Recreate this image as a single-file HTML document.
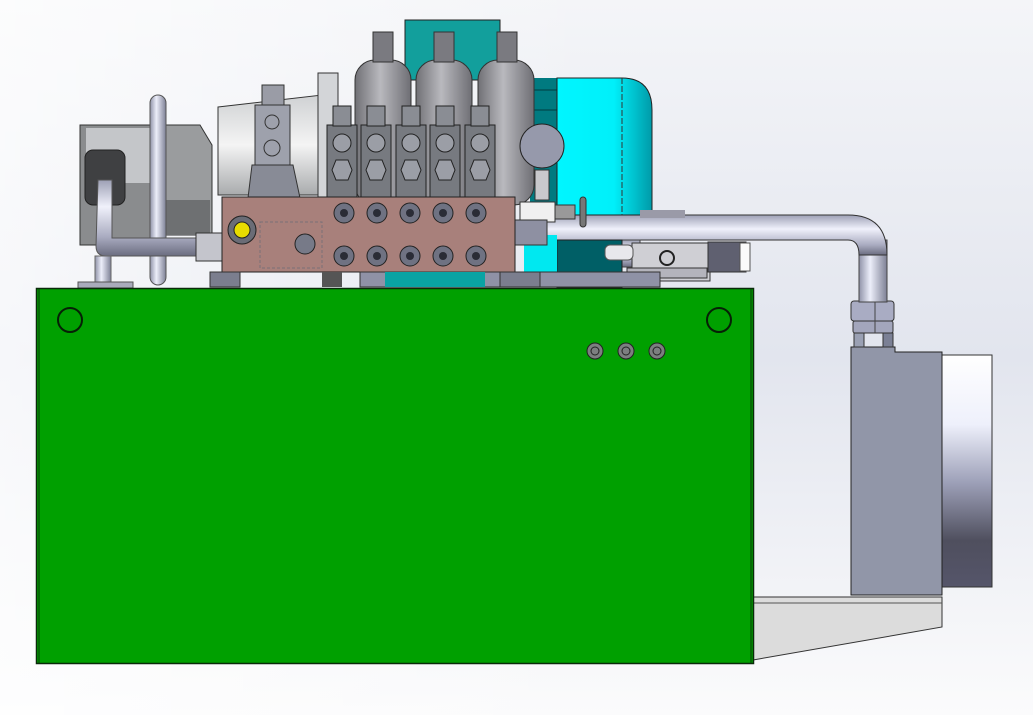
<!DOCTYPE html>
<html><head><meta charset="utf-8"><style>
html,body{margin:0;padding:0;width:1033px;height:715px;overflow:hidden;background:#fff}
svg{display:block}
</style></head><body>
<svg width="1033" height="715" viewBox="0 0 1033 715" xmlns="http://www.w3.org/2000/svg">
<defs>
<linearGradient id="bg" x1="0" y1="0" x2="0" y2="1">
<stop offset="0" stop-color="#f4f5f8"/><stop offset="0.5" stop-color="#e2e5ee"/><stop offset="1" stop-color="#fbfbfc"/></linearGradient>
<linearGradient id="bgx" x1="0" y1="0" x2="1" y2="0">
<stop offset="0" stop-color="#ffffff" stop-opacity="0.7"/><stop offset="1" stop-color="#ffffff" stop-opacity="0"/></linearGradient>
<linearGradient id="pipeH" x1="0" y1="0" x2="0" y2="1">
<stop offset="0" stop-color="#9da0b5"/><stop offset="0.35" stop-color="#f0f1fb"/><stop offset="0.75" stop-color="#a9abc0"/><stop offset="1" stop-color="#6b6d80"/></linearGradient>
<linearGradient id="pipeV" x1="0" y1="0" x2="1" y2="0">
<stop offset="0" stop-color="#8f92a8"/><stop offset="0.4" stop-color="#eceefa"/><stop offset="1" stop-color="#7d8095"/></linearGradient>
<linearGradient id="cyl" x1="0" y1="0" x2="1" y2="0">
<stop offset="0" stop-color="#707075"/><stop offset="0.45" stop-color="#b9b9be"/><stop offset="1" stop-color="#6e6e74"/></linearGradient>
<linearGradient id="disc" x1="0" y1="0" x2="0" y2="1">
<stop offset="0" stop-color="#ffffff"/><stop offset="0.3" stop-color="#eef0fb"/><stop offset="0.55" stop-color="#9da0b8"/><stop offset="0.8" stop-color="#4f4f5e"/><stop offset="1" stop-color="#55556a"/></linearGradient>
<linearGradient id="cyan" x1="0" y1="0" x2="1" y2="0">
<stop offset="0" stop-color="#00f6ff"/><stop offset="0.6" stop-color="#00f0fa"/><stop offset="1" stop-color="#009aa8"/></linearGradient>
<linearGradient id="bell" x1="0" y1="0" x2="0" y2="1">
<stop offset="0" stop-color="#cfd1d3"/><stop offset="0.5" stop-color="#f4f4f4"/><stop offset="1" stop-color="#a9abad"/></linearGradient>
</defs>
<rect width="1033" height="715" fill="url(#bg)"/>
<rect width="600" height="715" fill="url(#bgx)"/>

<!-- tray -->
<polygon points="753,597 942,597 942,627 753,660" fill="#dcdcdc" stroke="#333" stroke-width="1"/>
<line x1="753" y1="603" x2="942" y2="603" stroke="#555"/>
<!-- right box and disc -->
<rect x="940" y="355" width="52" height="232" fill="url(#disc)" stroke="#333"/>
<polygon points="851,347 895,347 895,352 942,352 942,595 851,595" fill="#9196a8" stroke="#222"/>
<rect x="854" y="333" width="10" height="14" fill="#9aa0b3" stroke="#333"/>
<rect x="883" y="333" width="10" height="14" fill="#7b8095" stroke="#333"/>
<rect x="853" y="321" width="40" height="12" rx="2" fill="#a3a6bc" stroke="#333"/>
<rect x="851" y="301" width="43" height="20" rx="3" fill="#a9acc3" stroke="#333"/>
<line x1="875" y1="301" x2="875" y2="333" stroke="#444"/>
<!-- pipe with bend -->
<rect x="859" y="240" width="28" height="62" fill="url(#pipeV)" stroke="#444"/>
<path d="M545,215 L848,215 Q887,215 887,255 L859,255 Q859,240 848,240 L545,240 Z" fill="url(#pipeH)" stroke="#333"/>
<rect x="560" y="240" width="80" height="27" fill="url(#pipeH)" stroke="#444"/>

<!-- motor -->
<rect x="530" y="78" width="30" height="140" fill="#007a80"/>
<g stroke="#003c40"><line x1="530" y1="90" x2="560" y2="90"/><line x1="530" y1="110" x2="560" y2="110"/><line x1="530" y1="130" x2="560" y2="130"/><line x1="530" y1="150" x2="560" y2="150"/></g>
<path d="M557,78 L622,78 Q652,78 652,110 L652,215 L557,215 Z" fill="url(#cyan)" stroke="#222"/>
<line x1="622" y1="78" x2="622" y2="215" stroke="#333" stroke-dasharray="6,2"/>
<rect x="557" y="240" width="65" height="48" fill="#005f66" stroke="#222"/>
<rect x="524" y="235" width="33" height="45" fill="#00e8f0"/>
<rect x="405" y="20" width="95" height="60" fill="#129f9c" stroke="#222"/>
<!-- pipe fitting on right -->
<rect x="632" y="243" width="78" height="38" fill="#cfcfd4" stroke="#333"/>
<circle cx="667" cy="258" r="7" fill="none" stroke="#222" stroke-width="2"/>
<rect x="627" y="268" width="80" height="10" fill="#b4b4bc" stroke="#333"/>
<rect x="605" y="245" width="28" height="15" rx="5" fill="#e8e8ec" stroke="#555"/>
<rect x="708" y="242" width="38" height="30" fill="#5f6070" stroke="#333"/>
<rect x="740" y="243" width="10" height="28" fill="#fafafa" stroke="#555"/>
<rect x="640" y="210" width="45" height="8" fill="#9a9aa8"/>

<!-- accumulators -->
<g stroke="#333">
<rect x="355" y="60" width="56" height="145" rx="20" fill="url(#cyl)"/>
<rect x="416" y="60" width="56" height="145" rx="20" fill="url(#cyl)"/>
<rect x="478" y="60" width="56" height="145" rx="20" fill="url(#cyl)"/>
<rect x="373" y="32" width="20" height="30" fill="#7a7a80"/>
<rect x="434" y="32" width="20" height="30" fill="#7a7a80"/>
<rect x="497" y="32" width="20" height="30" fill="#7a7a80"/>
</g>
<!-- bell housing -->
<polygon points="218,107 322,95 322,195 218,195" fill="url(#bell)" stroke="#333"/>
<rect x="318" y="73" width="20" height="125" fill="#d3d5d8" stroke="#333"/>
<!-- pump -->
<rect x="80" y="125" width="80" height="120" fill="#8a8c8e" stroke="#333"/>
<rect x="86" y="128" width="70" height="55" fill="#c4c6c9"/>
<polygon points="150,125 200,125 212,145 212,235 150,235" fill="#9a9c9e" stroke="#333"/>
<rect x="150" y="200" width="60" height="35" fill="#6e7072"/>
<rect x="85" y="150" width="40" height="55" rx="8" fill="#3f4042" stroke="#222"/>
<!-- pump pipes -->
<rect x="150" y="95" width="16" height="190" rx="8" fill="url(#pipeV)" stroke="#555"/>
<path d="M98,180 L112,180 L112,238 L200,238 L200,256 L106,256 Q96,256 96,246 Z" fill="url(#pipeH)" stroke="#555"/>
<rect x="196" y="233" width="28" height="28" fill="#c4c5cc" stroke="#333"/>
<rect x="95" y="256" width="16" height="28" fill="url(#pipeV)" stroke="#666"/>
<rect x="78" y="282" width="55" height="6" fill="#a9abbb" stroke="#555"/>
<!-- relief valve -->
<rect x="262" y="85" width="22" height="22" fill="#9a9ca6" stroke="#333"/>
<rect x="255" y="105" width="35" height="60" fill="#9ea1ac" stroke="#333"/>
<circle cx="272" cy="122" r="7" fill="none" stroke="#333"/>
<circle cx="272" cy="148" r="8" fill="none" stroke="#333"/>
<polygon points="252,165 293,165 300,198 248,198" fill="#888b96" stroke="#333"/>

<!-- directional valves -->
<g stroke="#222">
<rect x="327" y="125" width="30" height="72" fill="#777a80"/>
<rect x="361" y="125" width="30" height="72" fill="#777a80"/>
<rect x="396" y="125" width="30" height="72" fill="#777a80"/>
<rect x="430" y="125" width="30" height="72" fill="#777a80"/>
<rect x="465" y="125" width="30" height="72" fill="#777a80"/>
<rect x="333" y="106" width="18" height="20" fill="#8a8d94"/>
<rect x="367" y="106" width="18" height="20" fill="#8a8d94"/>
<rect x="402" y="106" width="18" height="20" fill="#8a8d94"/>
<rect x="436" y="106" width="18" height="20" fill="#8a8d94"/>
<rect x="471" y="106" width="18" height="20" fill="#8a8d94"/>
</g>
<g fill="#9b9ea6" stroke="#222">
<circle cx="342" cy="143" r="9"/><circle cx="376" cy="143" r="9"/><circle cx="411" cy="143" r="9"/><circle cx="445" cy="143" r="9"/><circle cx="480" cy="143" r="9"/>
<polygon points="336,160 348,160 352,170 348,180 336,180 332,170"/>
<polygon points="370,160 382,160 386,170 382,180 370,180 366,170"/>
<polygon points="405,160 417,160 421,170 417,180 405,180 401,170"/>
<polygon points="439,160 451,160 455,170 451,180 439,180 435,170"/>
<polygon points="474,160 486,160 490,170 486,180 474,180 470,170"/>
</g>
<!-- gauge -->
<circle cx="542" cy="146" r="22" fill="#9699ab" stroke="#222"/>
<rect x="535" y="170" width="14" height="30" fill="#c8c8cc" stroke="#333"/>
<rect x="520" y="202" width="35" height="20" fill="#f0f0f0" stroke="#333"/>
<rect x="555" y="205" width="20" height="14" fill="#999" stroke="#333"/>
<rect x="580" y="197" width="6" height="30" rx="3" fill="#777" stroke="#333"/>
<rect x="515" y="220" width="32" height="25" fill="#8e90a2" stroke="#333"/>

<!-- manifold -->
<rect x="222" y="197" width="293" height="75" fill="#a8807b" stroke="#222"/>
<rect x="210" y="272" width="30" height="15" fill="#7b7e8e" stroke="#333"/>
<rect x="322" y="272" width="20" height="15" fill="#555"/>
<rect x="360" y="272" width="300" height="15" fill="#8f92a6" stroke="#333"/>
<rect x="385" y="272" width="100" height="15" fill="#0aa3a3"/>
<rect x="500" y="272" width="40" height="15" fill="#7b7e8e" stroke="#333"/>
<circle cx="242" cy="230" r="14" fill="#6a6c76" stroke="#222"/>
<circle cx="242" cy="230" r="8" fill="#e8dc00" stroke="#222"/>
<rect x="260" y="222" width="62" height="46" fill="none" stroke="#7a7077" stroke-dasharray="3,2"/>
<circle cx="305" cy="244" r="10" fill="#777a88" stroke="#222"/>
<g fill="#6f7282" stroke="#222">
<circle cx="344" cy="213" r="10"/><circle cx="377" cy="213" r="10"/><circle cx="410" cy="213" r="10"/><circle cx="443" cy="213" r="10"/><circle cx="476" cy="213" r="10"/>
<circle cx="344" cy="256" r="10"/><circle cx="377" cy="256" r="10"/><circle cx="410" cy="256" r="10"/><circle cx="443" cy="256" r="10"/><circle cx="476" cy="256" r="10"/>
</g>
<g fill="#2a2c36">
<circle cx="344" cy="213" r="4"/><circle cx="377" cy="213" r="4"/><circle cx="410" cy="213" r="4"/><circle cx="443" cy="213" r="4"/><circle cx="476" cy="213" r="4"/>
<circle cx="344" cy="256" r="4"/><circle cx="377" cy="256" r="4"/><circle cx="410" cy="256" r="4"/><circle cx="443" cy="256" r="4"/><circle cx="476" cy="256" r="4"/>
</g>

<!-- green tank -->
<rect x="36.5" y="288.5" width="717" height="375" fill="#00a000" stroke="#0a2a0a" stroke-width="1.5"/>
<line x1="39" y1="289" x2="39" y2="663" stroke="#0a3a0a"/>
<line x1="751" y1="289" x2="751" y2="663" stroke="#0a3a0a"/>
<ellipse cx="70" cy="320" rx="12" ry="12" fill="none" stroke="#062006" stroke-width="2"/>
<ellipse cx="719" cy="320" rx="12" ry="12" fill="none" stroke="#062006" stroke-width="2"/>
<g fill="#7c7f80" stroke="#222">
<circle cx="595" cy="351" r="8"/><circle cx="626" cy="351" r="8"/><circle cx="657" cy="351" r="8"/></g>
<g fill="none" stroke="#222"><circle cx="595" cy="351" r="4"/><circle cx="626" cy="351" r="4"/><circle cx="657" cy="351" r="4"/></g>
</svg>
</body></html>
